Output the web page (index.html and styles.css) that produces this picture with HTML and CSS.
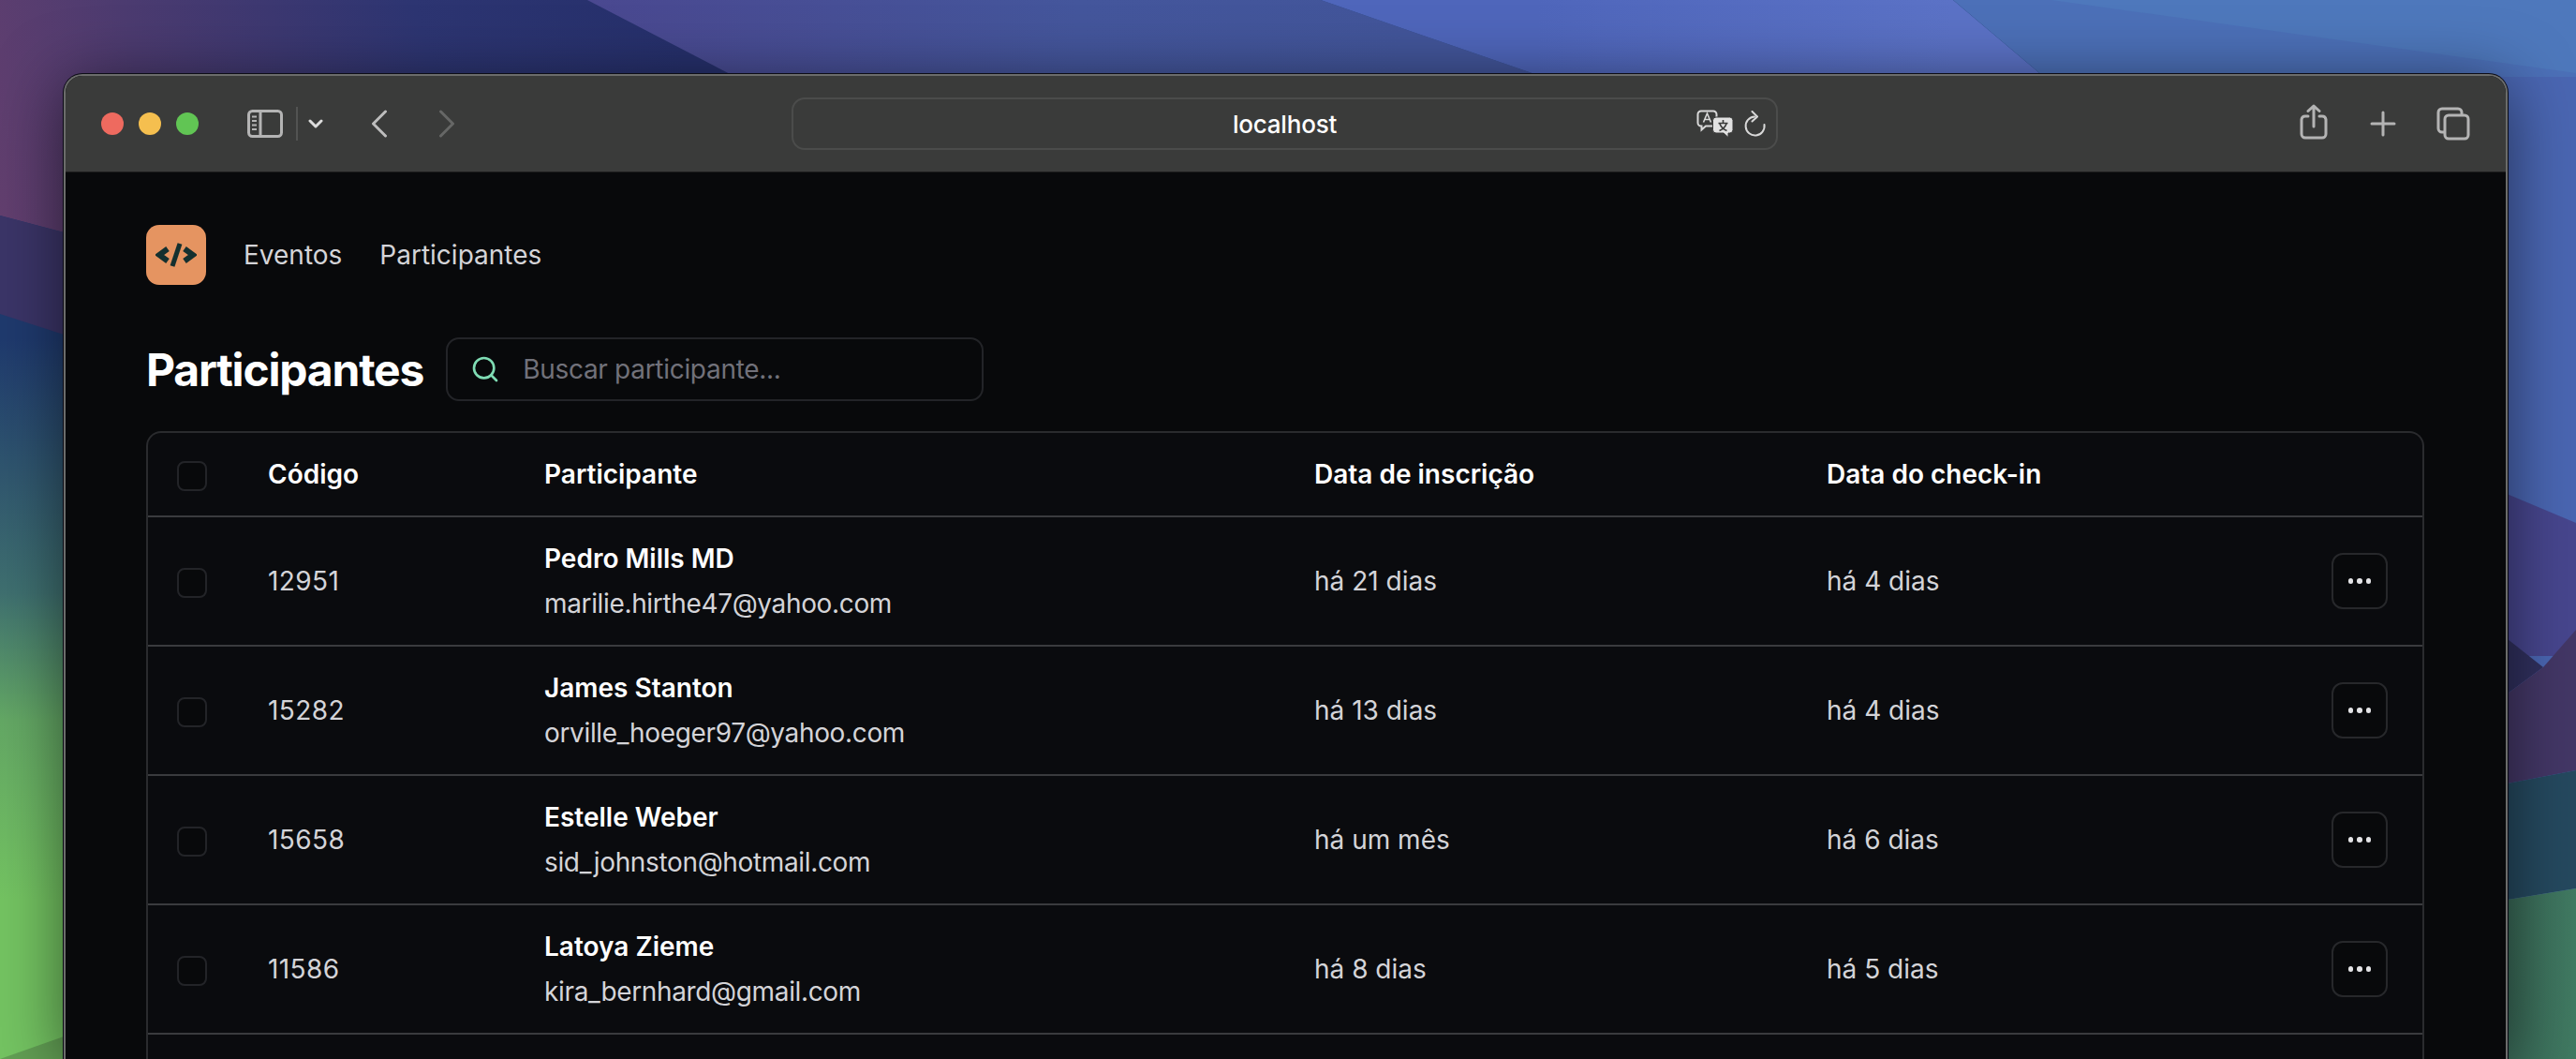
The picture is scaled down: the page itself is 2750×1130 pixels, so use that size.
FILE: index.html
```html
<!DOCTYPE html>
<html lang="pt-BR">
<head>
  <meta charset="UTF-8">
  <title>Participantes</title>
  <link rel="stylesheet" href="styles.css">
</head>
<body>
  <!-- papel de parede -->
  <svg class="wallpaper" viewBox="0 0 2750 1130" preserveAspectRatio="none">
    <defs>
      <linearGradient id="wpLeft" x1="0" y1="0" x2="0" y2="1130" gradientUnits="userSpaceOnUse">
        <stop offset="0" stop-color="#1f3a6e"/>
        <stop offset="0.32" stop-color="#1f3a6e"/>
        <stop offset="0.56" stop-color="#3f7070"/>
        <stop offset="0.68" stop-color="#64a865"/>
        <stop offset="0.85" stop-color="#74c462"/>
        <stop offset="1" stop-color="#74c462"/>
      </linearGradient>
      <linearGradient id="wpPurple" x1="0" y1="230" x2="720" y2="30" gradientUnits="userSpaceOnUse">
        <stop offset="0" stop-color="#633f6f"/>
        <stop offset="0.25" stop-color="#4c3b70"/>
        <stop offset="0.65" stop-color="#2d3572"/>
        <stop offset="1" stop-color="#26306c"/>
      </linearGradient>
      <linearGradient id="wpBand" x1="627" y1="0" x2="1500" y2="0" gradientUnits="userSpaceOnUse">
        <stop offset="0" stop-color="#4a4890"/>
        <stop offset="0.6" stop-color="#44569c"/>
        <stop offset="1" stop-color="#42559a"/>
      </linearGradient>
      <linearGradient id="wpBlue" x1="1640" y1="0" x2="2750" y2="0" gradientUnits="userSpaceOnUse">
        <stop offset="0" stop-color="#4f66bb"/>
        <stop offset="0.4" stop-color="#5b72c6"/>
        <stop offset="1" stop-color="#5b72c6"/>
      </linearGradient>
      <linearGradient id="wpGreen" x1="2677" y1="0" x2="2750" y2="0" gradientUnits="userSpaceOnUse">
        <stop offset="0" stop-color="#3a6a58"/>
        <stop offset="1" stop-color="#407a62"/>
      </linearGradient>
    </defs>
    <rect width="2750" height="1130" fill="url(#wpLeft)"/>
    <polygon points="2300,0 2750,0 2750,1130 2300,1130" fill="#4a66b2"/>
    <polygon points="0,0 800,0 800,300 68,248 0,230" fill="url(#wpPurple)"/>
    <polygon points="68,248 800,300 800,420 68,357" fill="url(#wpPurple)"/>
    <polygon points="0,230 68,248 68,357 0,335" fill="#3b3568"/>
    <polygon points="627,0 1410,0 1647,82 785,82" fill="url(#wpBand)"/>
    <polygon points="1410,0 2085,0 2182,82 1647,82" fill="url(#wpBlue)"/>
    <polygon points="2085,0 2750,0 2750,82 2182,82" fill="#4c70b8"/>
    <polygon points="2190,0 2750,0 2750,78" fill="#4e78bc"/>
    <polygon points="2600,495 2750,558 2750,700 2600,700" fill="#47468e"/>
    <polygon points="2677,682 2715,712 2677,740" fill="#30305e"/>
    <polygon points="2677,740 2715,712 2750,672 2750,822 2677,836" fill="#433766"/>
    <polygon points="2677,836 2750,822 2750,948 2677,960" fill="#25495f"/>
    <polygon points="2677,960 2750,948 2750,1130 2677,1130" fill="url(#wpGreen)"/>
    <polygon points="0,1130 68,1106 68,1130" fill="#629f54"/>
  </svg>

  <div class="window">
    <div class="toolbar">
      <div class="toolbar-left">
        <span class="light light-red"></span>
        <span class="light light-yellow"></span>
        <span class="light light-green"></span>
        <svg class="icon-sidebar" width="40" height="32" viewBox="0 0 40 32" fill="none" stroke="#b4b4b4" stroke-width="3">
          <rect x="2.500" y="2.500" width="35" height="27" rx="4"/>
          <path d="M15 3v26"/>
          <path d="M6 8.500h5M6 13h5M6 17.500h5M6 22h5" stroke-width="2"/>
        </svg>
        <span class="tool-divider"></span>
        <svg class="icon-dropdown" width="16" height="10" viewBox="0 0 16 10" fill="none" stroke="#dcdcdc" stroke-width="3" stroke-linecap="round" stroke-linejoin="round">
          <path d="M2 2l6 6 6-6"/>
        </svg>
        <svg class="icon-back" width="18" height="30" viewBox="0 0 18 30" fill="none" stroke="#bdbdbd" stroke-width="3" stroke-linecap="round" stroke-linejoin="round">
          <path d="M15.500 2L2.500 15l13 13"/>
        </svg>
        <svg class="icon-forward" width="18" height="30" viewBox="0 0 18 30" fill="none" stroke="#666766" stroke-width="3" stroke-linecap="round" stroke-linejoin="round">
          <path d="M2.500 2l13 13-13 13"/>
        </svg>
      </div>

      <div class="address">
        <span></span>
        <span class="address-text">localhost</span>
        <div class="address-icons">
          <svg width="40" height="30" viewBox="0 0 40 30" fill="none">
            <path d="M5 1.500h13a3.500 3.500 0 0 1 3.500 3.500v9a3.500 3.500 0 0 1-3.500 3.500H10l-4.500 4v-4H5A3.500 3.500 0 0 1 1.500 14V5A3.500 3.500 0 0 1 5 1.500z" stroke="#d8d8d8" stroke-width="2"/>
            <path d="M7.500 13.500l4-9.500 4 9.500M9 10.500h5" stroke="#d8d8d8" stroke-width="1.600"/>
            <path d="M21 8h14.500a3.500 3.500 0 0 1 3.500 3.500v10a3.500 3.500 0 0 1-3.500 3.500H34v4.500L29 25h-8a3.500 3.500 0 0 1-3.500-3.500v-10A3.500 3.500 0 0 1 21 8z" fill="#e2e2e2" stroke="#3a3b3a" stroke-width="1"/>
            <path d="M28.500 11v3M23.500 14.500h10M25 15c1 3 4 6 7.500 7.500M32 15c-1 3-4 6-7.500 7.500" stroke="#3a3b3a" stroke-width="1.600"/>
          </svg>
          <svg width="24" height="28" viewBox="0 0 24 28" fill="none" stroke="#d8d8d8" stroke-width="2" stroke-linecap="round" stroke-linejoin="round">
            <path d="M11 6.500A10 10 0 1 0 21.500 15"/>
            <path d="M8.500 1l5.500 5.500-5.500 5"/>
          </svg>
        </div>
      </div>

      <div class="toolbar-right">
        <svg class="icon-share" width="30" height="38" viewBox="0 0 30 38" fill="none" stroke="#b4b4b4" stroke-width="3" stroke-linecap="round" stroke-linejoin="round">
          <path d="M9 13H6a4 4 0 0 0-4 3.500V32a4 4 0 0 0 4 4h18a4 4 0 0 0 4-4V16.500A4 4 0 0 0 24 13h-3"/>
          <path d="M15 24V2M9 7.500L15 2l6 5.500"/>
        </svg>
        <svg width="28" height="28" viewBox="0 0 28 28" fill="none" stroke="#b4b4b4" stroke-width="3" stroke-linecap="round">
          <path d="M14 2v24M2 14h24"/>
        </svg>
        <svg class="icon-tabs" width="36" height="36" viewBox="0 0 36 36" fill="none" stroke="#b4b4b4" stroke-width="3">
          <path d="M8 27H6a4 4 0 0 1-4-4V6a4 4 0 0 1 4-4h17a4 4 0 0 1 4 4v2"/>
          <rect x="9" y="9" width="25" height="25" rx="4"/>
        </svg>
      </div>
    </div>

    <div class="page">
      <nav class="nav">
        <div class="logo">
          <svg width="44" height="28" viewBox="0 0 44 28" fill="none" stroke="#14302f" stroke-width="6">
            <path d="M13 7.500L4 14l9 6.500"/>
            <path d="M26 2l-8 24" stroke-width="5"/>
            <path d="M31 7.500L40 14l-9 6.500"/>
          </svg>
        </div>
        <a href="#" class="nav-link">Eventos</a>
        <a href="#" class="nav-link">Participantes</a>
      </nav>

      <div class="title-row">
        <h1 class="title">Participantes</h1>
        <div class="search">
          <svg width="32" height="32" viewBox="0 0 24 24" fill="none" stroke="#7fdcb4" stroke-width="2" stroke-linecap="round" stroke-linejoin="round">
            <circle cx="11" cy="11" r="8"/>
            <path d="M21 21l-4.300-4.300"/>
          </svg>
          <input type="text" class="search-input" placeholder="Buscar participante...">
        </div>
      </div>

      <div class="table-box">
        <table class="table">
          <colgroup>
            <col class="col-check"><col class="col-code"><col class="col-name"><col class="col-date"><col class="col-date2"><col>
          </colgroup>
          <thead>
            <tr>
              <th class="cell-check"><span class="checkbox"></span></th>
              <th>Código</th>
              <th>Participante</th>
              <th>Data de inscrição</th>
              <th>Data do check-in</th>
              <th></th>
            </tr>
          </thead>
          <tbody>
            <tr>
              <td class="cell-check"><span class="checkbox"></span></td>
              <td class="cell-code">12951</td>
              <td>
                <div class="person">
                  <span class="person-name">Pedro Mills MD</span>
                  <span class="person-email">marilie.hirthe47@yahoo.com</span>
                </div>
              </td>
              <td>há 21 dias</td>
              <td>há 4 dias</td>
              <td class="cell-action"><button class="more"><span></span><span></span><span></span></button></td>
            </tr>
            <tr>
              <td class="cell-check"><span class="checkbox"></span></td>
              <td class="cell-code">15282</td>
              <td>
                <div class="person">
                  <span class="person-name">James Stanton</span>
                  <span class="person-email">orville_hoeger97@yahoo.com</span>
                </div>
              </td>
              <td>há 13 dias</td>
              <td>há 4 dias</td>
              <td class="cell-action"><button class="more"><span></span><span></span><span></span></button></td>
            </tr>
            <tr>
              <td class="cell-check"><span class="checkbox"></span></td>
              <td class="cell-code">15658</td>
              <td>
                <div class="person">
                  <span class="person-name">Estelle Weber</span>
                  <span class="person-email">sid_johnston@hotmail.com</span>
                </div>
              </td>
              <td>há um mês</td>
              <td>há 6 dias</td>
              <td class="cell-action"><button class="more"><span></span><span></span><span></span></button></td>
            </tr>
            <tr>
              <td class="cell-check"><span class="checkbox"></span></td>
              <td class="cell-code">11586</td>
              <td>
                <div class="person">
                  <span class="person-name">Latoya Zieme</span>
                  <span class="person-email">kira_bernhard@gmail.com</span>
                </div>
              </td>
              <td>há 8 dias</td>
              <td>há 5 dias</td>
              <td class="cell-action"><button class="more"><span></span><span></span><span></span></button></td>
            </tr>
          </tbody>
        </table>
      </div>
    </div>
  </div>
</body>
</html>
```

FILE: styles.css
```css
* {
  box-sizing: border-box;
}
html, body {
  height: 100%;
}
body {
  margin: 0;
  padding: 79px 73px 0 68px;
  overflow: hidden;
  font-family: Inter, "Liberation Sans", sans-serif;
  color: #d4d4d8;
}
.wallpaper {
  position: absolute;
  top: 0;
  left: 0;
  width: 100%;
  height: 100%;
  z-index: -1;
}

/* janela */
.window {
  height: 100%;
  background: #08090b;
  border: 2px solid #6b6c6b;
  border-bottom: none;
  border-radius: 20px 20px 0 0;
  box-shadow: 0 0 0 1px #0c0c16, 0 10px 70px rgba(0, 0, 0, 0.55);
  overflow: hidden;
}
.toolbar {
  height: 103px;
  background: #3a3b3a;
  border-bottom: 1px solid #1d1d1d;
  display: grid;
  grid-template-columns: 775px 1053px 1fr;
  align-items: center;
}
.toolbar-left {
  display: flex;
  align-items: center;
  padding-left: 38px;
}
.light {
  width: 24px;
  height: 24px;
  border-radius: 50%;
  margin-right: 16px;
}
.light-red { background: #ee6a5f; }
.light-yellow { background: #f5bf4f; }
.light-green { background: #61c554; margin-right: 0; }
.icon-sidebar { margin-left: 51px; }
.tool-divider {
  width: 2px;
  height: 36px;
  background: #525352;
  margin-left: 13px;
}
.icon-dropdown { margin-left: 11px; }
.icon-back { margin-left: 51px; }
.icon-forward { margin-left: 54px; }

.address {
  height: 56px;
  border: 2px solid #4b4c4b;
  border-radius: 14px;
  display: grid;
  grid-template-columns: 1fr auto 1fr;
  align-items: center;
}
.address-text {
  font-size: 26px;
  font-weight: 500;
  letter-spacing: -0.2px;
  color: #fff;
}
.address-icons {
  display: flex;
  justify-content: flex-end;
  align-items: center;
  gap: 11px;
  padding-right: 10px;
}
.toolbar-right {
  display: flex;
  align-items: center;
  gap: 45px;
  padding-left: 557px;
}
.icon-share { margin-bottom: 4px; }
.icon-tabs { margin-left: -2px; }

/* conteudo */
.page {
  padding: 56px 87px 0 86px;
}
.nav {
  display: flex;
  align-items: center;
  gap: 40px;
}
.logo {
  width: 64px;
  height: 64px;
  border-radius: 14px;
  background: #e59461;
  display: flex;
  align-items: center;
  justify-content: center;
}
.nav-link {
  font-size: 28px;
  font-weight: 400;
  color: #d4d4d8;
  text-decoration: none;
}
.title-row {
  display: flex;
  align-items: center;
  gap: 24px;
  margin-top: 56px;
}
.title {
  margin: 0;
  font-size: 48px;
  font-weight: 700;
  letter-spacing: -1.2px;
  color: #fff;
}
.search {
  width: 574px;
  height: 68px;
  border: 2px solid #232428;
  border-radius: 14px;
  display: flex;
  align-items: center;
  gap: 22px;
  padding: 0 24px;
}
.search-input {
  flex: 1;
  min-width: 0;
  background: transparent;
  border: none;
  outline: none;
  font-family: inherit;
  font-size: 28px;
  letter-spacing: -0.3px;
  color: #d4d4d8;
}
.search-input::placeholder {
  color: #71717a;
  opacity: 1;
}

/* tabela */
.table-box {
  margin-top: 32px;
  height: 670px;
  background: #0a0b0e;
  border: 2px solid #2a2b2e;
  border-bottom: none;
  border-radius: 16px 16px 0 0;
}
.table {
  width: 100%;
  table-layout: fixed;
  border-collapse: separate;
  border-spacing: 0;
  font-size: 28px;
}
.col-check { width: 96px; }
.col-code { width: 295px; }
.col-name { width: 822px; }
.col-date { width: 547px; }
.col-date2 { width: 400px; }
.table th, .table td {
  padding: 0 32px;
  text-align: left;
  border-bottom: 2px solid #3a3b3e;
}
.table th {
  height: 90px;
  font-weight: 600;
  color: #fff;
}
.table td {
  height: 138px;
  font-weight: 400;
  color: #d4d4d8;
}
.table .cell-check {
  padding: 4px 0 0 31px;
  line-height: 0;
}
.table .cell-code {
  letter-spacing: 0.4px;
}
.checkbox {
  display: inline-block;
  width: 32px;
  height: 32px;
  border: 2px solid #232428;
  border-radius: 8px;
  background: #08090b;
}
.person {
  display: flex;
  flex-direction: column;
  gap: 8px;
  line-height: 40px;
}
.person-name {
  font-weight: 600;
  color: #fff;
}
.person-email {
  letter-spacing: -0.35px;
}
.table .cell-action {
  padding: 0 37px 0 0;
  text-align: right;
}
.more {
  width: 60px;
  height: 60px;
  padding: 0;
  background: #08090b;
  border: 2px solid #27282b;
  border-radius: 12px;
  display: inline-flex;
  align-items: center;
  justify-content: center;
  gap: 4px;
  vertical-align: middle;
}
.more span {
  width: 5.500px;
  height: 5.500px;
  border-radius: 50%;
  background: #e4e4e7;
}
```
